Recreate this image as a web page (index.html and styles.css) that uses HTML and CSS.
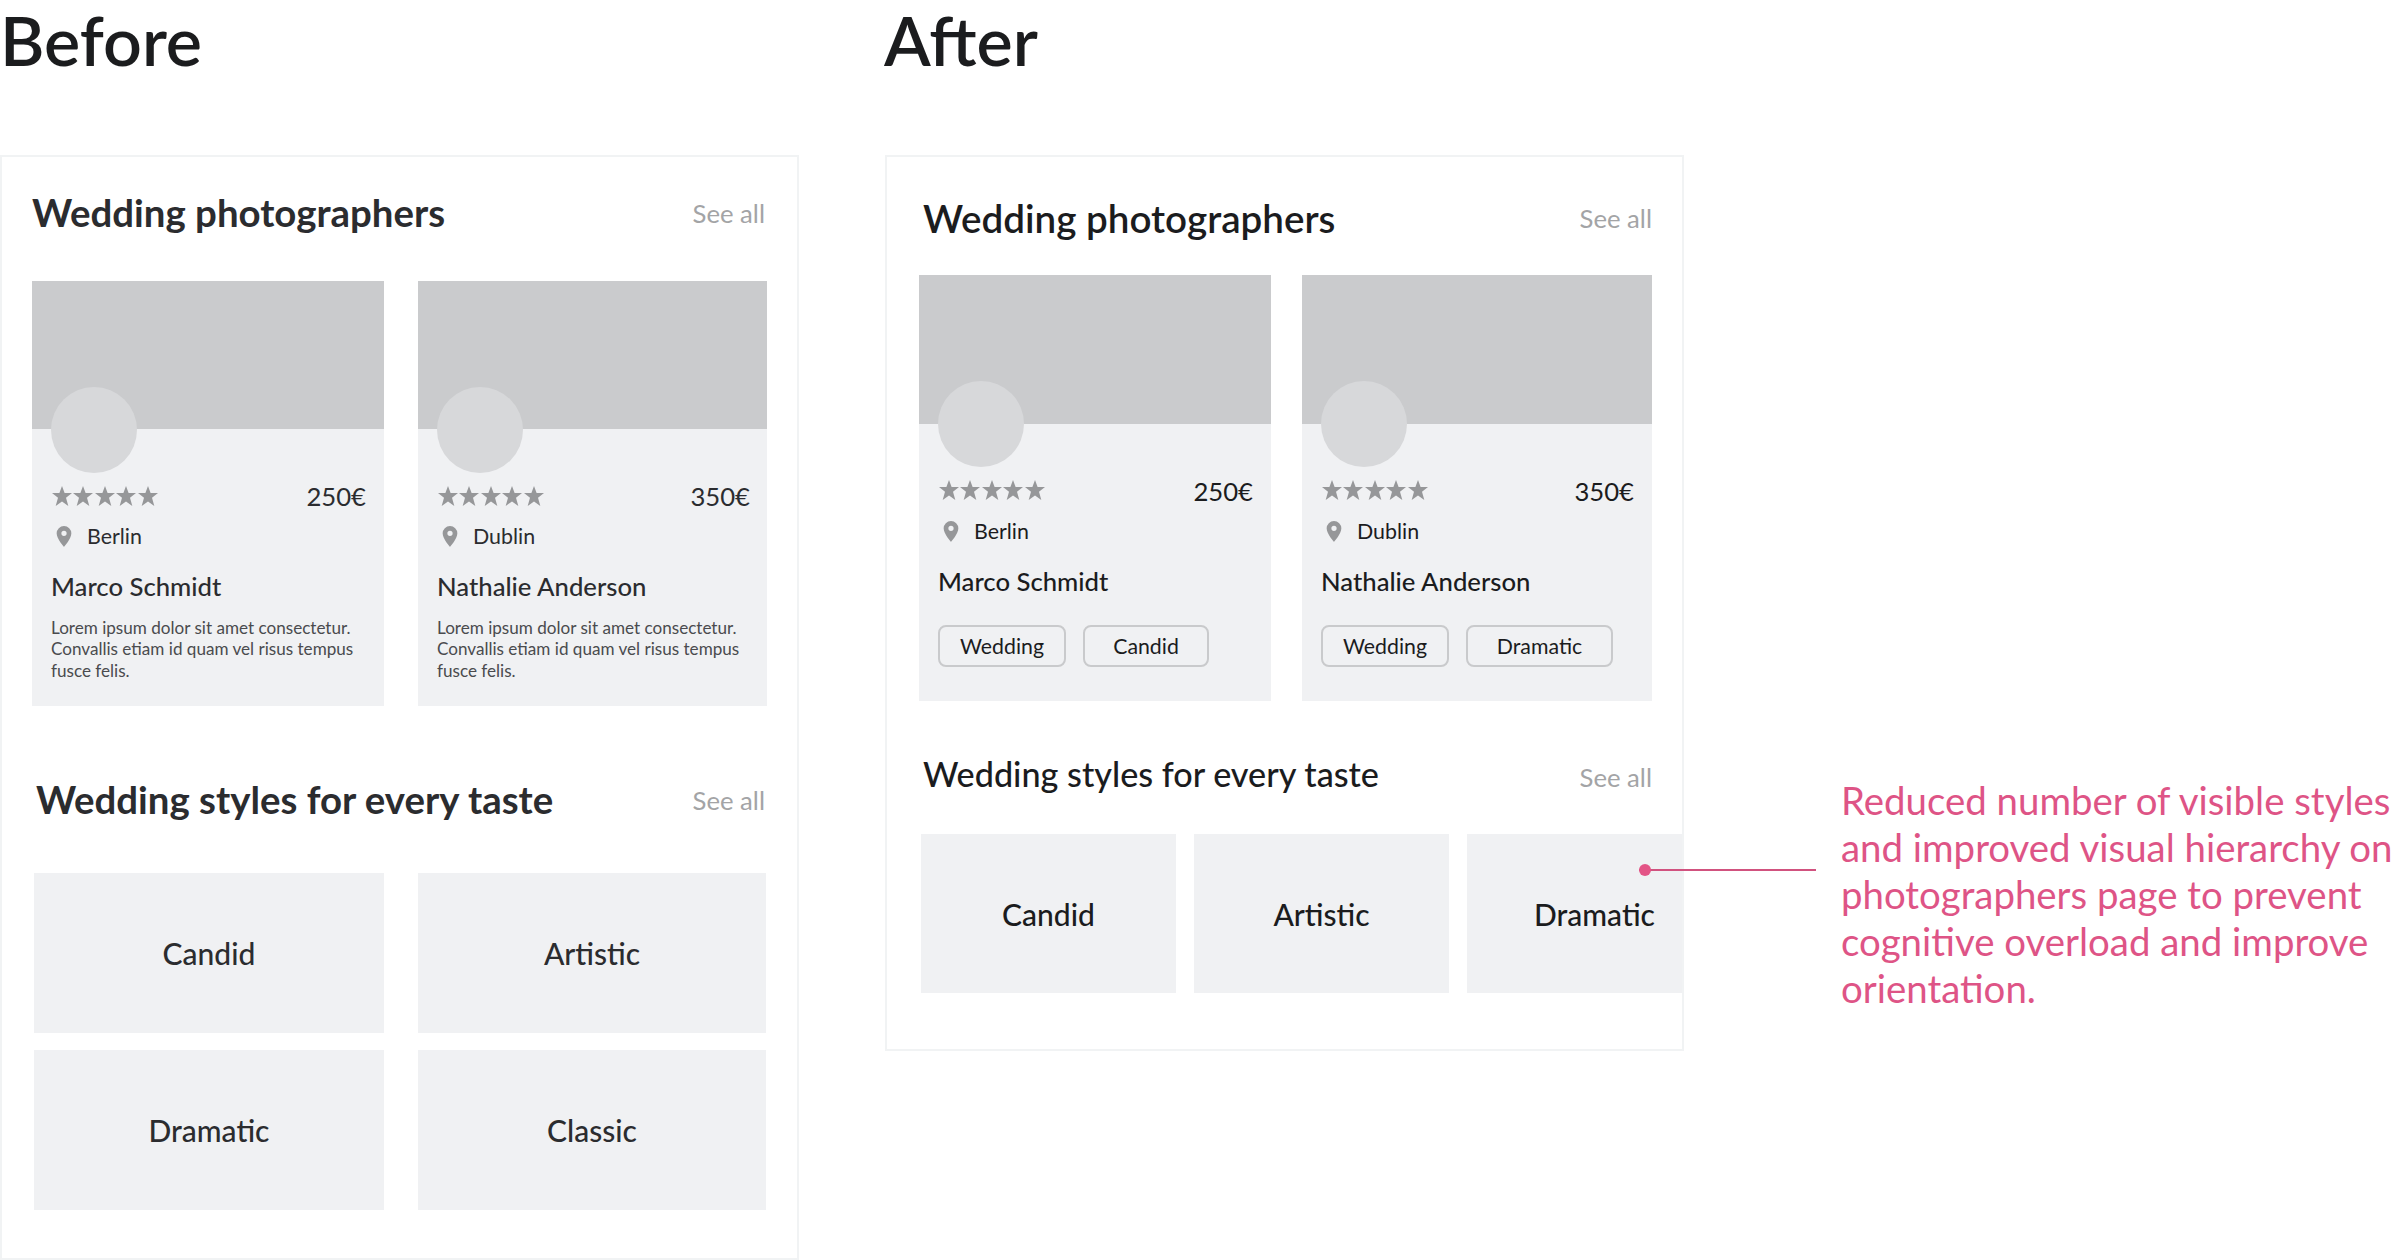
FILE: index.html
```html
<!DOCTYPE html>
<html lang="en">
<head>
<meta charset="utf-8">
<title>Before / After</title>
<link rel="stylesheet" href="styles.css">
</head>
<body>
<svg class="defs" aria-hidden="true">
  <defs>
    <symbol id="star" viewBox="0 0 20 20"><path d="M10 0l2.6 7.1H20l-6 4.75L16.3 20 10 15.4 3.7 20 6 11.85 0 7.1h7.4z"/></symbol>
    <symbol id="pin" viewBox="0 0 14 20"><path fill-rule="evenodd" d="M7 0a7 7 0 0 0-7 7c0 5.25 7 13 7 13s7-7.75 7-13a7 7 0 0 0-7-7zm0 4.5a2.5 2.5 0 1 1 0 5 2.5 2.5 0 0 1 0-5z"/></symbol>
  </defs>
</svg>
<main class="page">
  <section class="column before">
    <h1 class="title">Before</h1>
    <div class="panel">
      <header class="head"><h2>Wedding photographers</h2><span class="see-all">See all</span></header>
      <div class="cards">
        <article class="card">
          <div class="cover"></div>
          <div class="body">
            <div class="avatar"></div>
            <div class="rating">
              <span class="stars"><svg><use href="#star"/></svg><svg><use href="#star"/></svg><svg><use href="#star"/></svg><svg><use href="#star"/></svg><svg><use href="#star"/></svg></span>
              <span class="price">250€</span>
            </div>
            <div class="city"><svg class="pin"><use href="#pin"/></svg>Berlin</div>
            <h3 class="name">Marco Schmidt</h3>
            <p class="bio">Lorem ipsum dolor sit amet consectetur.<br>Convallis etiam id quam vel risus tempus<br>fusce felis.</p>
          </div>
        </article>
        <article class="card">
          <div class="cover"></div>
          <div class="body">
            <div class="avatar"></div>
            <div class="rating">
              <span class="stars"><svg><use href="#star"/></svg><svg><use href="#star"/></svg><svg><use href="#star"/></svg><svg><use href="#star"/></svg><svg><use href="#star"/></svg></span>
              <span class="price">350€</span>
            </div>
            <div class="city"><svg class="pin"><use href="#pin"/></svg>Dublin</div>
            <h3 class="name">Nathalie Anderson</h3>
            <p class="bio">Lorem ipsum dolor sit amet consectetur.<br>Convallis etiam id quam vel risus tempus<br>fusce felis.</p>
          </div>
        </article>
      </div>
      <header class="head styles-head"><h2>Wedding styles for every taste</h2><span class="see-all">See all</span></header>
      <div class="tiles">
        <div class="tile">Candid</div>
        <div class="tile">Artistic</div>
        <div class="tile">Dramatic</div>
        <div class="tile">Classic</div>
      </div>
    </div>
  </section>
  <section class="column after">
    <h1 class="title">After</h1>
    <div class="panel">
      <header class="head"><h2>Wedding photographers</h2><span class="see-all">See all</span></header>
      <div class="cards">
        <article class="card">
          <div class="cover"></div>
          <div class="body">
            <div class="avatar"></div>
            <div class="rating">
              <span class="stars"><svg><use href="#star"/></svg><svg><use href="#star"/></svg><svg><use href="#star"/></svg><svg><use href="#star"/></svg><svg><use href="#star"/></svg></span>
              <span class="price">250€</span>
            </div>
            <div class="city"><svg class="pin"><use href="#pin"/></svg>Berlin</div>
            <h3 class="name">Marco Schmidt</h3>
            <div class="tags"><span class="tag tag-wedding">Wedding</span><span class="tag tag-candid">Candid</span></div>
          </div>
        </article>
        <article class="card">
          <div class="cover"></div>
          <div class="body">
            <div class="avatar"></div>
            <div class="rating">
              <span class="stars"><svg><use href="#star"/></svg><svg><use href="#star"/></svg><svg><use href="#star"/></svg><svg><use href="#star"/></svg><svg><use href="#star"/></svg></span>
              <span class="price">350€</span>
            </div>
            <div class="city"><svg class="pin"><use href="#pin"/></svg>Dublin</div>
            <h3 class="name">Nathalie Anderson</h3>
            <div class="tags"><span class="tag tag-wedding">Wedding</span><span class="tag tag-dramatic">Dramatic</span></div>
          </div>
        </article>
      </div>
      <header class="head styles-head"><h2>Wedding styles for every taste</h2><span class="see-all">See all</span></header>
      <div class="tiles">
        <div class="tile">Candid</div>
        <div class="tile">Artistic</div>
        <div class="tile">Dramatic</div>
      </div>
    </div>
  </section>
  <aside class="note">
    <div class="pointer"></div>
    <p>Reduced number of visible styles<br>and improved visual hierarchy on<br>photographers page to prevent<br>cognitive overload and improve<br>orientation.</p>
  </aside>
</main>
</body>
</html>
```
FILE: styles.css
```css
* { box-sizing: border-box; }
html, body { margin: 0; background: #fff; }
body { font-family: Lato, Carlito, sans-serif; color: #1b1c1e; overflow: hidden; }
h1, h2, h3, p { margin: 0; }
.defs { display: none; }

.page { display: flex; width: 2400px; height: 1260px; }
.column { width: 799px; flex: none; }
.after { margin-left: 86px; }
.title { height: 155px; font-size: 68.2px; line-height: 80px; font-weight: 600; }
.after .title { margin-left: -1px; }

.panel { border: 2px solid #f1f3f4; overflow: hidden; }
.before .panel { height: 1105px; padding: 31px 30px 0; color: #2b2c2f; }
.after .panel { height: 896px; padding: 37px 30px 0 32px; }

.head { display: flex; justify-content: space-between; height: 48px; line-height: 48px; }
.head h2 { font-size: 38.4px; font-weight: 700; }
.see-all { font-size: 25.7px; font-weight: 400; color: #a3a4a6; }
.before .head { padding-right: 2px; }
.before .see-all { padding-top: 1px; }
.after .head { padding-left: 4px; }
.after .head h2 { font-weight: 600; font-size: 38.6px; }
.before .styles-head { margin-top: 69px; padding-left: 4px; }
.after .styles-head { margin-top: 49px; align-items: baseline; }
.after .styles-head h2 { font-size: 34.2px; font-weight: 500; }

.cards { display: flex; }
.before .cards { gap: 34px; margin-top: 45px; }
.after .cards { gap: 31px; margin-top: 33px; }
.card { width: 352px; height: 425px; background: #f0f1f3; flex: none; }
.before .card + .card { width: 349px; }
.after .card + .card { width: 350px; }
.cover { height: 148px; background: #cacbcd; }
.after .card { height: 426px; }
.after .cover { height: 149px; }
.body { padding: 0 18px 0 19px; }
.before .card + .card .body { padding-right: 17px; }
.avatar { position: relative; width: 86px; height: 86px; margin-top: -42px; border-radius: 50%; background: #d7d8da; }
.after .avatar { margin-top: -43px; }
.rating { display: flex; justify-content: space-between; margin-top: 7px; height: 32px; line-height: 32px; font-size: 25.7px; }
.after .rating { margin-top: 8px; }
.stars { display: flex; gap: 1.4px; padding: 6px 0 0 1px; }
.stars svg { width: 20px; height: 20px; fill: #969799; }
.after .stars { padding-top: 5px; }
.city { display: flex; align-items: center; margin-top: 11px; height: 26px; line-height: 28px; font-size: 21.4px; }
.pin { width: 16px; height: 21px; margin: 0 15px 0 5px; fill: #969799; }
.name { margin-top: 21px; line-height: 32px; font-size: 25.7px; font-weight: 500; }
.bio { margin-top: 15px; line-height: 21.4px; font-size: 17.1px; color: #4a4b4e; white-space: nowrap; }
.tags { display: flex; gap: 17px; margin-top: 28px; }
.tag { display: flex; align-items: center; justify-content: center; height: 42px; border: 2px solid #c9cacc; border-radius: 8px; font-size: 21.3px; }
.tag-wedding { width: 128px; }
.tag-candid { width: 126px; }
.tag-dramatic { width: 147px; }

.tiles { font-size: 30px; font-weight: 500; }
.before .tiles { display: grid; grid-template-columns: 350px 348px; grid-auto-rows: 160px; gap: 17px 34px; margin: 50px 0 0 2px; }
.after .tiles { display: flex; gap: 18px; margin: 36px 0 0 2px; }
.tile { display: flex; align-items: center; justify-content: center; background: #f0f1f3; }
.after .tile { flex: none; width: 255px; height: 159px; }

.note { display: flex; flex: none; margin-left: -45px; padding-top: 776.5px; color: #de5486; font-size: 38.4px; line-height: 47px; white-space: nowrap; }
.pointer { position: relative; width: 177px; height: 2px; margin: 92.5px 25px 0 0; background: #d1527f; }
.pointer::before { content: ""; position: absolute; left: 0; top: -5px; width: 12px; height: 12px; border-radius: 50%; background: #e35486; }
```
